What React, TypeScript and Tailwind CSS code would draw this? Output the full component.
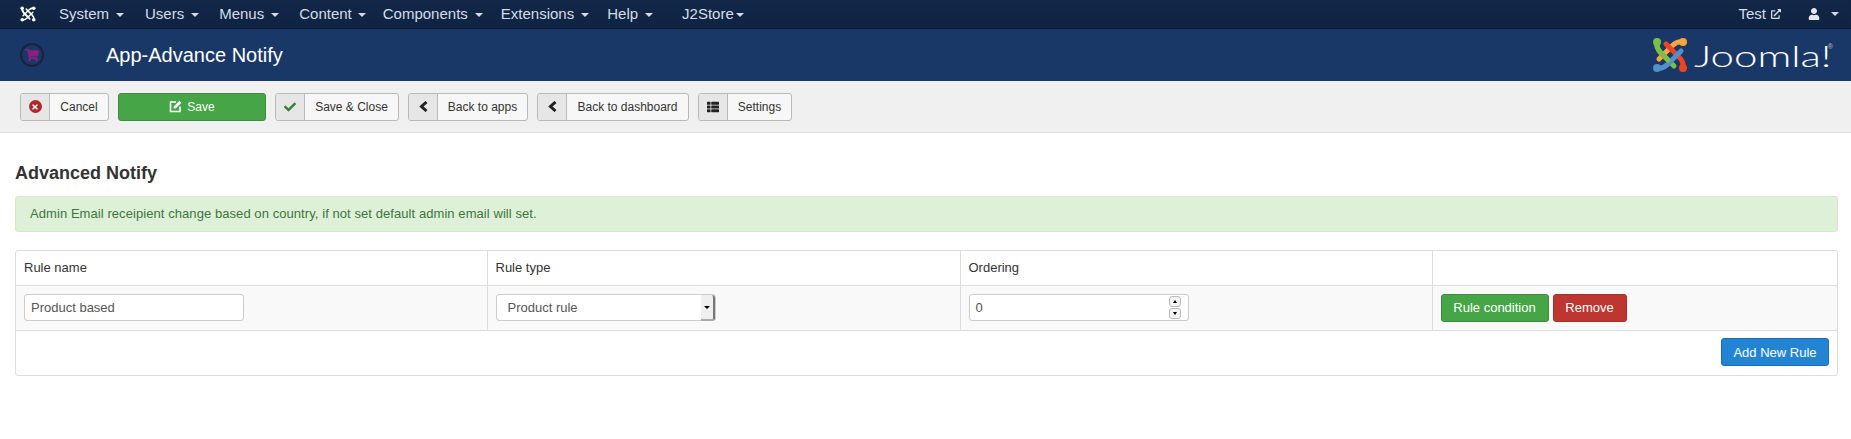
import React from "react";
import { FaCheck, FaShoppingCart, FaThList, FaTimes, FaUser, FaExternalLinkAlt } from "react-icons/fa";

const Caret = ({ className = "ml-[7px]" }: { className?: string }) => (
  <span className={`inline-block h-0 w-0 border-x-[4px] border-t-[4px] border-x-transparent border-t-[#d4dbe5] align-middle ${className}`} />
);

function JoomlaMark({ size, mono }: { size: number; mono?: boolean }) {
  const c = mono ? ["#fff", "#fff", "#fff", "#fff"] : ["#7ac143", "#f9a541", "#f44321", "#5091cd"];
  return (
    <svg width={size} height={size} viewBox="0 0 36 36" fill="none" strokeLinecap="round" strokeLinejoin="round">
      <g strokeWidth={mono ? 3.4 : 5}>
        <path d="M5 5 C4 10 6 13 9 16 L22 29" stroke={c[0]} />
        <path d="M31 5 C26 4 23 6 20 9 L7 22" stroke={c[1]} />
        <path d="M31 31 C32 26 30 23 27 20 L14 7" stroke={c[2]} />
        <path d="M5 31 C10 32 13 30 16 27 L29 14" stroke={c[3]} />
        <path d="M5 5 C4 10 6 13 9 16 L16 23" stroke={c[0]} />
      </g>
      <circle cx="5" cy="5" r="4" fill={c[0]} />
      <circle cx="31" cy="5" r="4" fill={c[1]} />
      <circle cx="31" cy="31" r="4" fill={c[2]} />
      <circle cx="5" cy="31" r="4" fill={c[3]} />
    </svg>
  );
}

const Chevron = () => (
  <svg width="9" height="11" viewBox="0 0 9 11" fill="none">
    <polyline points="7.5,1 2.5,5.5 7.5,10" stroke="#222" strokeWidth="3" />
  </svg>
);

const SaveIcon = () => (
  <svg width="13" height="13" viewBox="0 0 13 13" fill="none">
    <path d="M7 2 H1.5 V11.5 H11 V6.5" stroke="#fff" strokeWidth="1.6" />
    <path d="M4.5 8.5 L5 6.2 L10.4 0.8 L12.4 2.8 L7 8.2 Z" fill="#fff" />
  </svg>
);

function ToolButton({ icon, label, width }: { icon: React.ReactNode; label: string; width: string }) {
  return (
    <div className={`flex h-[28px] ${width} rounded-[3px] border border-[#b9b9b9] bg-[#f7f7f7] text-[12px] text-[#333]`}>
      <span className="flex w-[29px] shrink-0 items-center justify-center rounded-l-[3px] border-r border-[#b9b9b9] bg-[#e6e6e6]">{icon}</span>
      <span className="flex flex-1 items-center justify-center">{label}</span>
    </div>
  );
}

const th = "h-[34px] border-r border-[#ddd] px-[8px] text-left text-[13px] font-normal text-[#333]";
const td = "h-[45px] border-r border-[#ddd] px-[8px] align-middle";
const field = "flex h-[27px] w-[220px] items-center rounded-[3px] border border-[#ccc] bg-white text-[13px] text-[#555]";

export default function App() {
  return (
    <div className="h-[439px] w-[1851px] overflow-hidden bg-white font-['Liberation_Sans',Arial,sans-serif] text-[#333]">
      <nav className="flex h-[29px] items-center border-b border-[#0b1a30] bg-gradient-to-b from-[#122747] to-[#0f2342] text-[15px] text-[#d5dde8]">
        <span className="ml-[20px] mr-[23px] flex w-[16px] justify-center"><JoomlaMark size={16} mono /></span>
        <div className="flex items-center">
          <span className="mr-[21px]">System<Caret /></span>
          <span className="mr-[20px]">Users<Caret /></span>
          <span className="mr-[20px]">Menus<Caret /></span>
          <span className="mr-[17px]">Content<Caret className="ml-[6px]" /></span>
          <span className="mr-[18px]">Components<Caret /></span>
          <span className="mr-[18px]">Extensions<Caret /></span>
          <span className="mr-[29px]">Help<Caret /></span>
          <span>J2Store<Caret className="ml-[2px]" /></span>
        </div>
        <div className="ml-auto flex items-center pr-[12px]">
          <span className="flex items-center">Test<FaExternalLinkAlt className="ml-[5px] text-[10px]" /></span>
          <span className="ml-[27px] flex items-center"><FaUser className="text-[12px] text-[#e4e8ee]" /><Caret className="ml-[11px]" /></span>
        </div>
      </nav>

      <header className="flex h-[52px] items-center bg-[#1a3867] pr-[18px]">
        <span className="ml-[20px] flex h-[24px] w-[24px] items-center justify-center rounded-full border-2 border-[#18233f]">
          <FaShoppingCart className="text-[14px] text-[#8f1f7f]" />
        </span>
        <h1 className="ml-[62px] text-[20px] font-normal text-white">App-Advance Notify</h1>
        <div className="ml-auto flex items-center text-white">
          <JoomlaMark size={36} />
          <span className="ml-[6px] w-[133px] origin-left scale-x-[1.4] font-['Lato',sans-serif] text-[30px] font-light leading-none">Joomla!</span>
          <span className="mb-[16px] ml-[1px] text-[7px] text-[#b9c6d8]">®</span>
        </div>
      </header>

      <div className="flex h-[52px] items-center gap-[9px] border-b border-[#dedede] bg-[#f0f0f0] pl-[20px]">
        <ToolButton width="w-[89px]" label="Cancel" icon={<span className="flex h-[13px] w-[13px] items-center justify-center rounded-full bg-[#b0282c]"><FaTimes className="text-[8px] text-white" /></span>} />
        <div className="flex h-[28px] w-[148px] items-center justify-center rounded-[3px] border border-[#3a8e3d] bg-[#46a546] text-[12px] text-white">
          <span className="mr-[5px]"><SaveIcon /></span>Save
        </div>
        <ToolButton width="w-[124px]" label="Save & Close" icon={<FaCheck className="text-[12px] text-[#378137]" />} />
        <ToolButton width="w-[120px]" label="Back to apps" icon={<Chevron />} />
        <ToolButton width="w-[152px]" label="Back to dashboard" icon={<Chevron />} />
        <ToolButton width="w-[94px]" label="Settings" icon={<FaThList className="text-[12px] text-[#222]" />} />
      </div>

      <main className="pl-[15px] pr-[13px]">
        <h2 className="mt-[30px] text-[18px] font-bold leading-[20px] text-[#333]">Advanced Notify</h2>
        <div className="mt-[13px] flex h-[36px] items-center rounded-[3px] border border-[#d6e9c6] bg-[#dff0d8] px-[14px] text-[13px] tracking-[0.07px] text-[#3c763d]">
          Admin Email receipient change based on country, if not set default admin email will set.
        </div>
        <div className="mt-[18px] h-[126px] overflow-hidden rounded-[3px] border border-[#ddd]">
          <table className="w-full table-fixed border-collapse">
            <colgroup>
              <col className="w-[471px]" />
              <col className="w-[473px]" />
              <col className="w-[472px]" />
              <col />
            </colgroup>
            <thead>
              <tr>
                <th className={th}>Rule name</th>
                <th className={th}>Rule type</th>
                <th className={th}>Ordering</th>
                <th className="h-[34px]" />
              </tr>
            </thead>
            <tbody>
              <tr className="border-y border-[#ddd] bg-[#f9f9f9]">
                <td className={td}>
                  <div className={`${field} pl-[6px]`}>Product based</div>
                </td>
                <td className={td}>
                  <div className={`${field} relative pl-[11px]`}>
                    Product rule
                    <span className="absolute right-0 top-0 flex h-[26px] w-[14px] items-center justify-center rounded-r-[3px] border-b-2 border-r-2 border-b-[#aaa] border-r-[#777] bg-[#efefef]">
                      <span className="h-0 w-0 border-x-[3px] border-t-[3px] border-x-transparent border-t-black" />
                    </span>
                  </div>
                </td>
                <td className={td}>
                  <div className={`${field} relative pl-[6px]`}>
                    0
                    <span className="absolute right-[7px] top-[1px] flex flex-col gap-[1px]">
                      <span className="flex h-[11px] w-[12px] items-center justify-center rounded-[3px] border border-[#bbb] bg-[#f4f4f4]">
                        <span className="h-0 w-0 border-x-[2.5px] border-b-[3px] border-x-transparent border-b-black" />
                      </span>
                      <span className="flex h-[11px] w-[12px] items-center justify-center rounded-[3px] border border-[#bbb] bg-[#f4f4f4]">
                        <span className="h-0 w-0 border-x-[2.5px] border-t-[3px] border-x-transparent border-t-black" />
                      </span>
                    </span>
                  </div>
                </td>
                <td className="h-[45px] px-[8px]">
                  <div className="flex gap-[4px]">
                    <button className="h-[28px] w-[108px] rounded-[3px] border border-[#3a8e3d] bg-[#46a546] text-[13px] text-white">Rule condition</button>
                    <button className="h-[28px] w-[74px] rounded-[3px] border border-[#a52e28] bg-[#bd362f] text-[13px] text-white">Remove</button>
                  </div>
                </td>
              </tr>
              <tr>
                <td colSpan={4} className="h-[44px] px-[8px]">
                  <div className="flex justify-end">
                    <button className="h-[28px] w-[108px] rounded-[3px] border border-[#1c6cb0] bg-[#2384d3] text-[13px] text-white">Add New Rule</button>
                  </div>
                </td>
              </tr>
            </tbody>
          </table>
        </div>
      </main>
    </div>
  );
}
